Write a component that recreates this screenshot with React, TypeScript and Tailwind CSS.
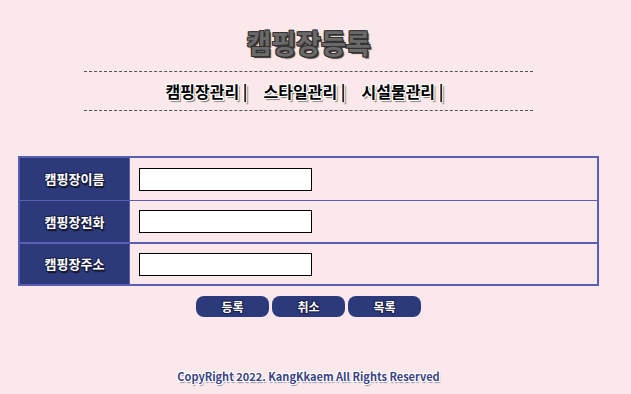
import React from 'react';

const font = '[font-family:"Noto_Sans_CJK_KR","Noto_Sans",sans-serif]';

const rows = ['캠핑장이름', '캠핑장전화', '캠핑장주소'];

const App: React.FC = () => {
  return (
    <div className={`w-[631px] h-[394px] bg-[#fae8ea] ${font}`}>
      <div className="w-[617px] flex flex-col items-center">
        <h1 className="mt-[24px] h-[38px] text-[27px] leading-[38px] font-bold text-[#6a6a6a] [text-shadow:1px_1px_0_#333,-1px_-1px_0_#333,1px_-1px_0_#333,-1px_1px_0_#333,2px_2px_1px_#333]">
          캠핑장등록
        </h1>
        <div className="mt-[9px] w-[449px] border-t border-dashed border-[#555]" />
        <nav className="h-[38px] flex items-center justify-center gap-[16px] pr-[8px] text-[16px] font-bold text-black [text-shadow:1px_1px_0_#fff,-1px_-1px_0_#fff,1px_-1px_0_#fff,-1px_1px_0_#fff,2px_2px_1px_#777]">
          <span>캠핑장관리 |</span>
          <span>스타일관리 |</span>
          <span>시설물관리 |</span>
        </nav>
        <div className="w-[449px] border-t border-dashed border-[#555]" />
      </div>

      <div className="mt-[45px] ml-[18px] w-[581px] border-2 border-[#5a5fb2]">
        {rows.map((label, i) => (
          <div
            key={label}
            className={`flex h-[42px] ${i === 1 ? 'border-t border-[#5a5fb2]' : ''} ${i === 2 ? 'border-t-2 border-[#5a5fb2]' : ''}`}
          >
            <div className="w-[109px] bg-[#2c3a7c] flex items-center justify-center text-[13px] font-bold text-white [text-shadow:1px_1px_0_#1a1f45,-1px_-1px_0_#1a1f45,1px_-1px_0_#1a1f45,-1px_1px_0_#1a1f45,1px_2px_1px_#111]">
              {label}
            </div>
            <div className="flex-1 border-l border-[#5a5fb2] flex items-center pl-[9px]">
              <input
                type="text"
                className="w-[173px] h-[23px] bg-white border border-black outline-none"
              />
            </div>
          </div>
        ))}
      </div>

      <div className="w-[617px] mt-[10px] flex justify-center gap-[3px]">
        {['등록', '취소', '목록'].map((b) => (
          <button
            key={b}
            className="w-[73px] h-[21px] rounded-[8px] bg-[#2c3a7c] text-[12px] font-bold text-white leading-none [text-shadow:1px_1px_0_#1a1f45,-1px_-1px_0_#1a1f45,1px_-1px_0_#1a1f45,-1px_1px_0_#1a1f45]"
          >
            {b}
          </button>
        ))}
      </div>

      <p className="w-[617px] mt-[51px] text-center text-[11px] font-bold text-[#3d4384] [text-shadow:1px_1px_0_#fff,-1px_-1px_0_#fff,1px_-1px_0_#fff,-1px_1px_0_#fff,1px_2px_1px_#8a8ab0]">
        CopyRight 2022. KangKkaem All Rights Reserved
      </p>
    </div>
  );
};

export default App;
